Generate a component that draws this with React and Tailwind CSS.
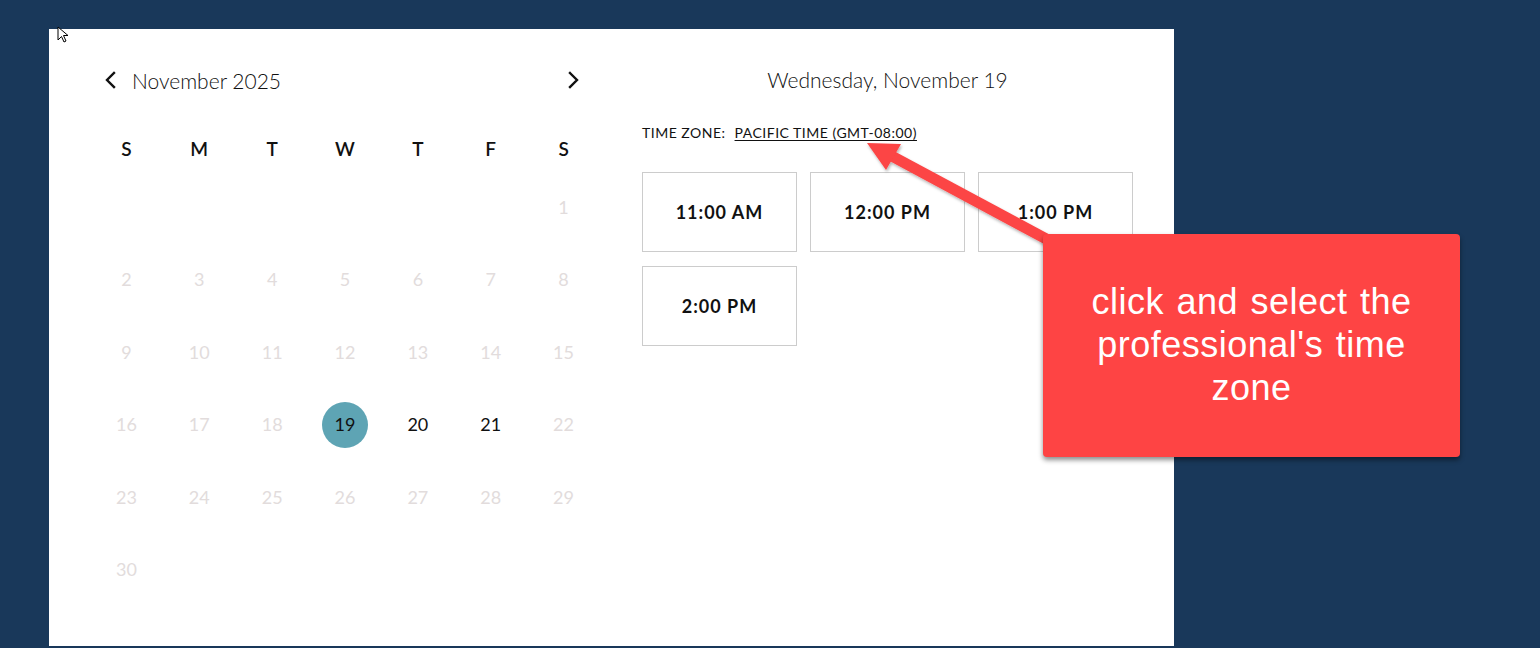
import React from "react";

const rows = [
  [null, null, null, null, null, null, 1],
  [2, 3, 4, 5, 6, 7, 8],
  [9, 10, 11, 12, 13, 14, 15],
  [16, 17, 18, 19, 20, 21, 22],
  [23, 24, 25, 26, 27, 28, 29],
  [30, null, null, null, null, null, null],
];
const days = ["S", "M", "T", "W", "T", "F", "S"];
const slots = ["11:00 AM", "12:00 PM", "1:00 PM", "2:00 PM"];

function Chevron({ dir }) {
  return (
    <svg width="14" height="20" viewBox="0 0 14 20" fill="none">
      {dir === "left" ? (
        <path d="M10 3 L3 10 L10 17" stroke="#111" strokeWidth="2.4" strokeLinecap="square" />
      ) : (
        <path d="M4 3 L11 10 L4 17" stroke="#111" strokeWidth="2.4" strokeLinecap="square" />
      )}
    </svg>
  );
}

export default function App() {
  const font = { fontFamily: "Lato, 'Open Sans', sans-serif" };
  return (
    <div className="relative w-[1540px] h-[648px] bg-[#19385a] overflow-hidden" style={font}>
      <div className="pl-[49px] pt-[29px]">
        <div className="w-[1125px] h-[617px] bg-white flex pl-[41px] gap-[42px] pt-[37px]">
          {/* Calendar */}
          <div className="w-[510px] flex flex-col">
            <div className="h-[28px] flex items-center justify-between pl-[14px] pr-[20px]">
              <div className="flex items-center gap-[14px]">
                <Chevron dir="left" />
                <span className="text-[21px] font-light text-[#111] leading-none">November 2025</span>
              </div>
              <Chevron dir="right" />
            </div>
            <div className="grid grid-cols-7 mt-[42px] h-[24px] items-center">
              {days.map((d, i) => (
                <div key={i} className="text-center text-[19px] font-semibold text-[#111] leading-none">
                  {d}
                </div>
              ))}
            </div>
            <div className="mt-[11px] flex flex-col">
              {rows.map((r, ri) => (
                <div key={ri} className="grid grid-cols-7 h-[72.5px] items-center">
                  {r.map((n, ci) => {
                    if (n === null) return <div key={ci} />;
                    if (n === 19)
                      return (
                        <div key={ci} className="flex justify-center">
                          <div className="w-[46px] h-[46px] rounded-full bg-[#5ea4b4] flex items-center justify-center text-[18px] text-[#111]">
                            19
                          </div>
                        </div>
                      );
                    const active = n === 20 || n === 21;
                    return (
                      <div
                        key={ci}
                        className={`text-center text-[18px] ${active ? "text-[#111]" : "text-[#e2dcdc]"}`}
                      >
                        {n}
                      </div>
                    );
                  })}
                </div>
              ))}
            </div>
          </div>
          {/* Times */}
          <div className="w-[491px] flex flex-col">
            <div className="h-[28px] flex items-center justify-center text-[21px] font-light text-[#111]">
              Wednesday, November 19
            </div>
            <div className="mt-[32px] text-[14px] text-[#111] leading-none flex gap-[9px] tracking-[0.5px]">
              <span>TIME ZONE:</span>
              <span className="underline underline-offset-2">PACIFIC TIME (GMT-08:00)</span>
            </div>
            <div className="mt-[32px] grid grid-cols-3 gap-x-[13px] gap-y-[14px]">
              {slots.map((s) => (
                <div
                  key={s}
                  className="h-[80px] border border-[#cccccc] flex items-center justify-center text-[18px] font-bold text-[#111] tracking-[1px]"
                >
                  {s}
                </div>
              ))}
            </div>
          </div>
        </div>
      </div>

      {/* cursor */}
      <svg className="absolute left-[57px] top-[26px]" width="14" height="18" viewBox="0 0 14 18">
        <path d="M1 1 L1 14 L4.5 10.5 L7 16 L9 15 L6.5 9.5 L11 9.5 Z" fill="white" stroke="black" strokeWidth="1" />
      </svg>

      {/* arrow */}
      <svg className="absolute left-0 top-0" width="1540" height="648" style={{ pointerEvents: "none" }}>
        <defs>
          <filter id="sh" x="-20%" y="-20%" width="140%" height="140%">
            <feDropShadow dx="1" dy="2" stdDeviation="1.5" floodColor="#000" floodOpacity="0.3" />
          </filter>
        </defs>
        <g filter="url(#sh)">
          <line x1="888" y1="154" x2="1065" y2="249" stroke="#fc4444" strokeWidth="11" />
          <polygon points="867,143 886,170 901,144" fill="#fc4444" />
        </g>
      </svg>

      {/* callout */}
      <div className="absolute left-[1043px] top-[234px] w-[417px] h-[223px] bg-[#fe4444] rounded-[4px] shadow-[0_3px_5px_rgba(0,0,0,0.45)] flex items-center justify-center px-[30px]">
        <p
          className="text-white text-center text-[36px] leading-[43px] tracking-[0.5px] [word-spacing:2px] pb-[2px]"
          style={{ fontFamily: "'Liberation Sans', Arial, sans-serif" }}
        >
          click and select the professional's time zone
        </p>
      </div>
    </div>
  );
}
